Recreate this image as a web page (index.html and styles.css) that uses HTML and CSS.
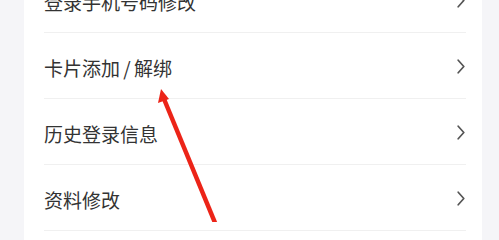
FILE: index.html
```html
<!DOCTYPE html>
<html lang="zh-CN">
<head>
<meta charset="utf-8">
<link rel="stylesheet" href="styles.css">
</head>
<body>
<div class="page">
  <div class="side side-left"></div>
  <div class="card">
    <div class="row"><span class="label">登录手机号码修改</span><svg class="chev" viewBox="0 0 8 15"><polyline points="1.2,1.2 6.8,7.5 1.2,13.8"/></svg></div>
    <div class="row"><span class="label">卡片添加 / 解绑</span><svg class="chev" viewBox="0 0 8 15"><polyline points="1.2,1.2 6.8,7.5 1.2,13.8"/></svg></div>
    <div class="row"><span class="label">历史登录信息</span><svg class="chev" viewBox="0 0 8 15"><polyline points="1.2,1.2 6.8,7.5 1.2,13.8"/></svg></div>
    <div class="row"><span class="label">资料修改</span><svg class="chev" viewBox="0 0 8 15"><polyline points="1.2,1.2 6.8,7.5 1.2,13.8"/></svg></div>
  </div>
  <div class="side side-right"></div>
  <svg class="arrow" viewBox="0 0 499 222" width="499" height="222">
    <line x1="218" y1="230" x2="164" y2="99" />
    <polygon points="161,89 158,103 169,99" />
  </svg>
</div>
</body>
</html>
```
FILE: styles.css
```css
html, body {
  margin: 0;
  padding: 0;
  height: 100%;
  background: #f5f5f8;
  overflow: hidden;
}
.page {
  position: relative;
  display: flex;
  width: 100%;
  height: 100vh;
  overflow: hidden;
  font-family: "Noto Sans CJK SC", "Noto Sans", sans-serif;
}
.side-left {
  width: 24px;
  flex: none;
  background: #f5f5f8;
}
.side-right {
  width: 17px;
  flex: none;
  background: #f5f5f8;
}
.card {
  flex: 1;
  background: #fff;
  margin-top: -33px;
  overflow: hidden;
}
.row {
  height: 65px;
  margin: 0 16px 0 20px;
  border-bottom: 1px solid #f0f0f0;
  display: flex;
  align-items: center;
  justify-content: space-between;
}
.label {
  font-size: 19px;
  color: #333;
  padding-top: 3px;
  word-spacing: -1px;
}
.chev {
  width: 8px;
  height: 15px;
  margin-right: 1px;
  margin-top: 2px;
}
.chev polyline {
  fill: none;
  stroke: #555;
  stroke-width: 1.7;
  stroke-linecap: round;
  stroke-linejoin: round;
}
.arrow {
  position: absolute;
  left: 0;
  top: 0;
}
.arrow line {
  stroke: #ec2418;
  stroke-width: 4.5;
}
.arrow polygon {
  fill: #ec2418;
}
```
